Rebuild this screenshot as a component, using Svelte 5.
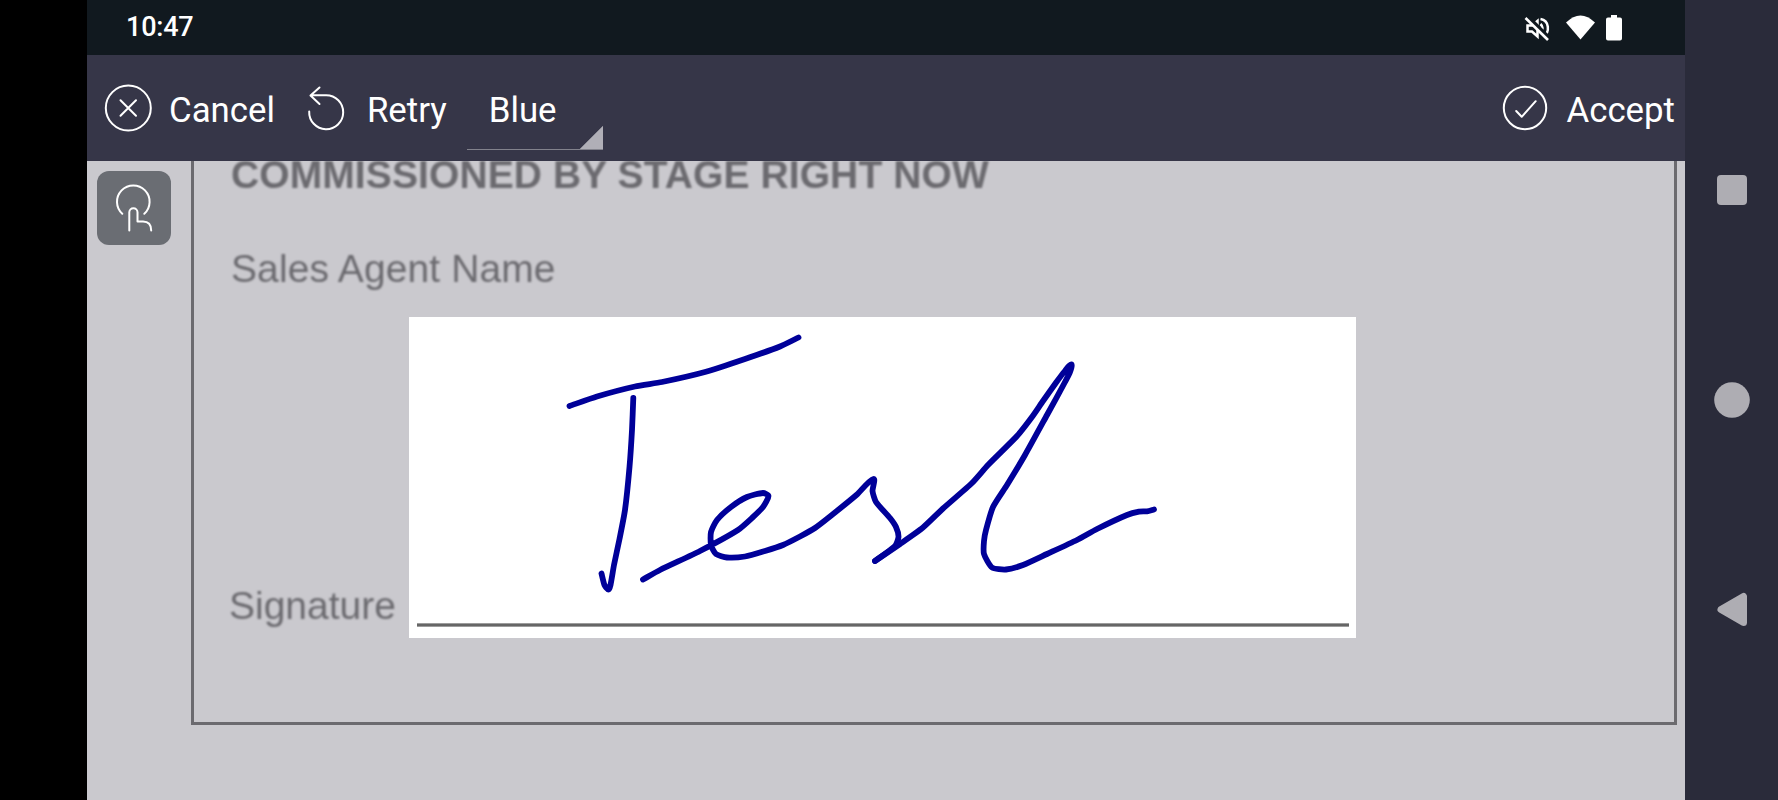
<script>
  let inkColor = $state('Blue');

  const inks = { Blue: '#000099', Black: '#000000' };

  /** Captured pen strokes, in screen coordinates */
  const strokes = [
    [[569.5, 406], [597, 396.5], [635, 386.5], [662, 382], [705, 372], [745, 359], [780, 346.5], [798.5, 337.5]],
    [[633.3, 398], [632, 430], [629.5, 467], [625, 510], [619.5, 539], [614, 565], [610.5, 585], [608.5, 589.5], [604.5, 585], [601.5, 573.5]],
    [
      [643, 579.5], [660, 570], [700, 551], [738, 530], [752, 518], [763, 507], [768.5, 496], [763, 493], [747, 497],
      [731, 507], [717, 520], [711, 532], [711, 545], [716, 554], [727, 557.5], [745, 556.5], [765, 551], [783, 545],
      [800, 536.5], [815, 528], [830, 516.5], [857, 494.5], [873.5, 479], [872.5, 491], [876, 502], [890, 518], [896, 527],
      [898.5, 537], [895, 546], [875, 561]
    ],
    [
      [875, 561], [900, 544], [923, 527.5], [943, 508.5], [972, 483], [988, 465], [1017, 436], [1032, 417], [1043, 401],
      [1056.5, 382], [1064.5, 371.5], [1071.2, 364.5], [1070, 372], [1065, 382], [1047, 415], [1025, 455], [1007, 485],
      [993, 507], [986, 530], [984, 541], [984, 554], [992, 567.5], [1006, 569.5], [1023, 565], [1047, 554], [1077, 540],
      [1097, 529], [1127, 515], [1139, 511.7], [1147, 511.3], [1154, 509.5]
    ]
  ];

  /**
   * Smooth a list of points into a path
   * @param {number[][]} pts
   */
  function toPath(pts) {
    let d = `M${pts[0][0]} ${pts[0][1]}`;
    for (let i = 0; i < pts.length - 1; i++) {
      const a = pts[i - 1] ?? pts[i];
      const b = pts[i];
      const c = pts[i + 1];
      const e = pts[i + 2] ?? c;
      // keep the handles short next to uneven samples
      const len = Math.hypot(c[0] - b[0], c[1] - b[1]);
      const k1 = (len / (Math.hypot(c[0] - a[0], c[1] - a[1]) || 1)) * 0.2;
      const k2 = (len / (Math.hypot(e[0] - b[0], e[1] - b[1]) || 1)) * 0.2;
      d += `C${b[0] + (c[0] - a[0]) * k1} ${b[1] + (c[1] - a[1]) * k1} ${c[0] - (e[0] - b[0]) * k2} ${c[1] - (e[1] - b[1]) * k2} ${c[0]} ${c[1]}`;
    }
    return d;
  }
</script>

<div class="device">
  <div class="screen">
    <!-- Status bar -->
    <header class="status-bar">
      <span class="clock">10:47</span>
      <svg class="status-icons" width="100" height="30" viewBox="1524 12.5 100 30">
        <path d="M1527.5 25h4.500l5.500-4.500v15.500l-5.500-5h-4.500z" fill="none" stroke="#fff" stroke-width="2.500" />
        <path d="M1540.500 23.500q4 4 0 9M1540.500 18.500c9 1.500 9.500 13.500 3 17" fill="none" stroke="#fff" stroke-width="2.500" />
        <path d="M1527.500 16l22.500 22.500" stroke="#11191f" stroke-width="4" />
        <path d="M1525.500 17.500L1548 39.500" stroke="#fff" stroke-width="2.600" />
        <path d="M1566 22q14.500-14 29 0l-14.500 17z" fill="#fff" />
        <path d="M1611 17v-2.500h6V17h3q2 0 2 2v19q0 2-2 2h-12q-2 0-2-2V19q0-2 2-2z" fill="#fff" />
      </svg>
    </header>

    <!-- Toolbar -->
    <nav class="toolbar">
      <button class="action">
        <svg class="line-icon" width="48" height="48" viewBox="104 84 48 48">
          <circle cx="128.300" cy="108" r="22.500" />
          <path d="M120.500 100.300l15.500 15.500M136 100.300l-15.500 15.500" />
        </svg>
        <span>Cancel</span>
      </button>
      <button class="action retry">
        <svg class="line-icon" width="40" height="48" viewBox="306 84 40 48">
          <path d="M309.200 111.500A17 17 0 1 0 326.200 95.200H311M319.500 87.500l-9 8 9 8.500" />
        </svg>
        <span>Retry</span>
      </button>
      <button class="spinner" onclick={() => (inkColor = inkColor === 'Blue' ? 'Black' : 'Blue')}>
        {inkColor}
      </button>
      <button class="action accept">
        <svg class="line-icon" width="48" height="48" viewBox="1501 84 48 48">
          <circle cx="1525" cy="108" r="21.200" />
          <path d="M1516.200 111l5.500 5.800 14-15.600" />
        </svg>
        <span>Accept</span>
      </button>
    </nav>

    <!-- Document -->
    <main class="document">
      <section class="page">
        <h1>COMMISSIONED BY STAGE RIGHT NOW</h1>
        <p class="agent">Sales Agent Name</p>
        <div class="sign-row">
          <p class="sign-label">Signature</p>
          <div class="sign-pad">
            <svg class="ink" width="947" height="321" viewBox="409 317 947 321" stroke={inks[inkColor]}>
              {#each strokes as stroke}
                <path d={toPath(stroke)} />
              {/each}
            </svg>
            <div class="sign-line"></div>
          </div>
        </div>
      </section>

      <button class="touch-toggle" aria-label="Touch mode">
        <svg class="line-icon" width="74" height="74" viewBox="97 171 74 74">
          <path d="M122.300 213.800A16.300 16.300 0 1 1 144.300 213.800" />
          <path d="M129.300 230.500V212.300a4.100 4.100 0 0 1 8.200 0V221.500h5.500q8.200 0 8.200 9" />
        </svg>
      </button>
    </main>
  </div>

  <!-- System navigation -->
  <aside class="system-nav">
    <svg width="40" height="40" viewBox="0 0 40 40"><rect x="5" y="5" width="30" height="30" rx="4" /></svg>
    <svg width="40" height="40" viewBox="0 0 40 40"><circle cx="20" cy="20" r="17.800" /></svg>
    <svg width="40" height="40" viewBox="0 0 40 40">
      <path d="M9 19.500L31.500 6.500v26z" stroke="#aeadb3" stroke-width="7" stroke-linejoin="round" />
    </svg>
  </aside>
</div>

<style>
  :global(body) {
    background: #000;
    overflow: hidden;
  }

  .device {
    display: flex;
    width: 1778px;
    height: 800px;
    box-sizing: border-box;
    padding-left: 87px;
    font-family: Roboto, sans-serif;
  }

  button {
    padding: 0;
    border: 0;
    background: none;
    color: inherit;
    font: inherit;
  }

  svg {
    display: block;
    flex: none;
  }

  .screen {
    display: flex;
    flex-direction: column;
    width: 1598px;
  }

  /* Status bar */
  .status-bar {
    display: flex;
    align-items: center;
    justify-content: space-between;
    height: 55px;
    box-sizing: border-box;
    padding: 0 61px 0 39px;
    background: #11191f;
    color: #fff;
  }

  .clock {
    padding-bottom: 1px;
    font-size: 27px;
    font-weight: 500;
    letter-spacing: -0.2px;
  }

  /* Toolbar */
  .toolbar {
    display: flex;
    align-items: center;
    height: 106px;
    box-sizing: border-box;
    padding: 0 10px 0 17px;
    background: #363648;
    color: #fff;
    font-size: 34.8px;
    line-height: 40px;
  }

  .action {
    display: flex;
    align-items: center;
    gap: 17px;
  }

  .action span {
    padding-top: 3px;
  }

  .retry {
    margin-left: 31px;
    gap: 21px;
  }

  .accept {
    margin-left: auto;
  }

  .line-icon {
    fill: none;
    stroke: #fff;
    stroke-width: 2;
    stroke-linecap: round;
    stroke-linejoin: round;
  }

  .spinner {
    width: 136px;
    height: 60px;
    box-sizing: border-box;
    margin: 24px 0 0 20px;
    padding: 0 0 19px 22px;
    border-bottom: 1px solid #82828c;
    background: linear-gradient(135deg, transparent 50%, #b0afb7 calc(50% + 1px)) right bottom / 24px 24px no-repeat;
    text-align: left;
  }

  /* Document */
  .document {
    position: relative;
    height: 639px;
    background: #cac9ce;
    overflow: hidden;
    font-family: 'Liberation Sans', Arial, sans-serif;
    font-size: 39px;
    line-height: 44px;
    color: #6b6a6f;
  }

  .page {
    width: 1486px;
    height: 564px;
    box-sizing: border-box;
    margin-left: 104px;
    border: solid #6b6a6f;
    border-width: 0 3px 3px;
  }

  h1,
  p {
    margin: 0;
    font-size: inherit;
    white-space: nowrap;
    filter: blur(0.8px);
  }

  h1 {
    height: 94px;
    margin-left: 37px;
    line-height: 27px;
    letter-spacing: 0.1px;
  }

  .agent {
    height: 62px;
    margin: -22px 0 0 37px;
    line-height: 71px;
    letter-spacing: 0.1px;
  }

  .sign-row {
    display: flex;
    align-items: flex-end;
    margin: 22px 0 0 35px;
  }

  .sign-label {
    width: 180px;
    padding-bottom: 10px;
  }

  .sign-pad {
    display: flex;
    flex-direction: column;
    width: 947px;
    height: 321px;
    background: #fff;
  }

  .ink {
    fill: none;
    stroke-width: 5.8;
    stroke-linecap: round;
    stroke-linejoin: round;
  }

  .sign-line {
    height: 4px;
    margin: -15px 7px 0 8px;
    background: linear-gradient(#bbb, #666 35%, #666 65%, #bbb);
  }

  .touch-toggle {
    position: absolute;
    top: 10px;
    left: 10px;
    width: 74px;
    height: 74px;
    border-radius: 12px;
    background: #6a6d73;
  }

  /* System navigation */
  .system-nav {
    display: flex;
    flex-direction: column;
    align-items: center;
    justify-content: space-between;
    width: 93px;
    box-sizing: border-box;
    padding: 170px 0;
    background: #2a2b3a;
    fill: #aeadb3;
  }
</style>
